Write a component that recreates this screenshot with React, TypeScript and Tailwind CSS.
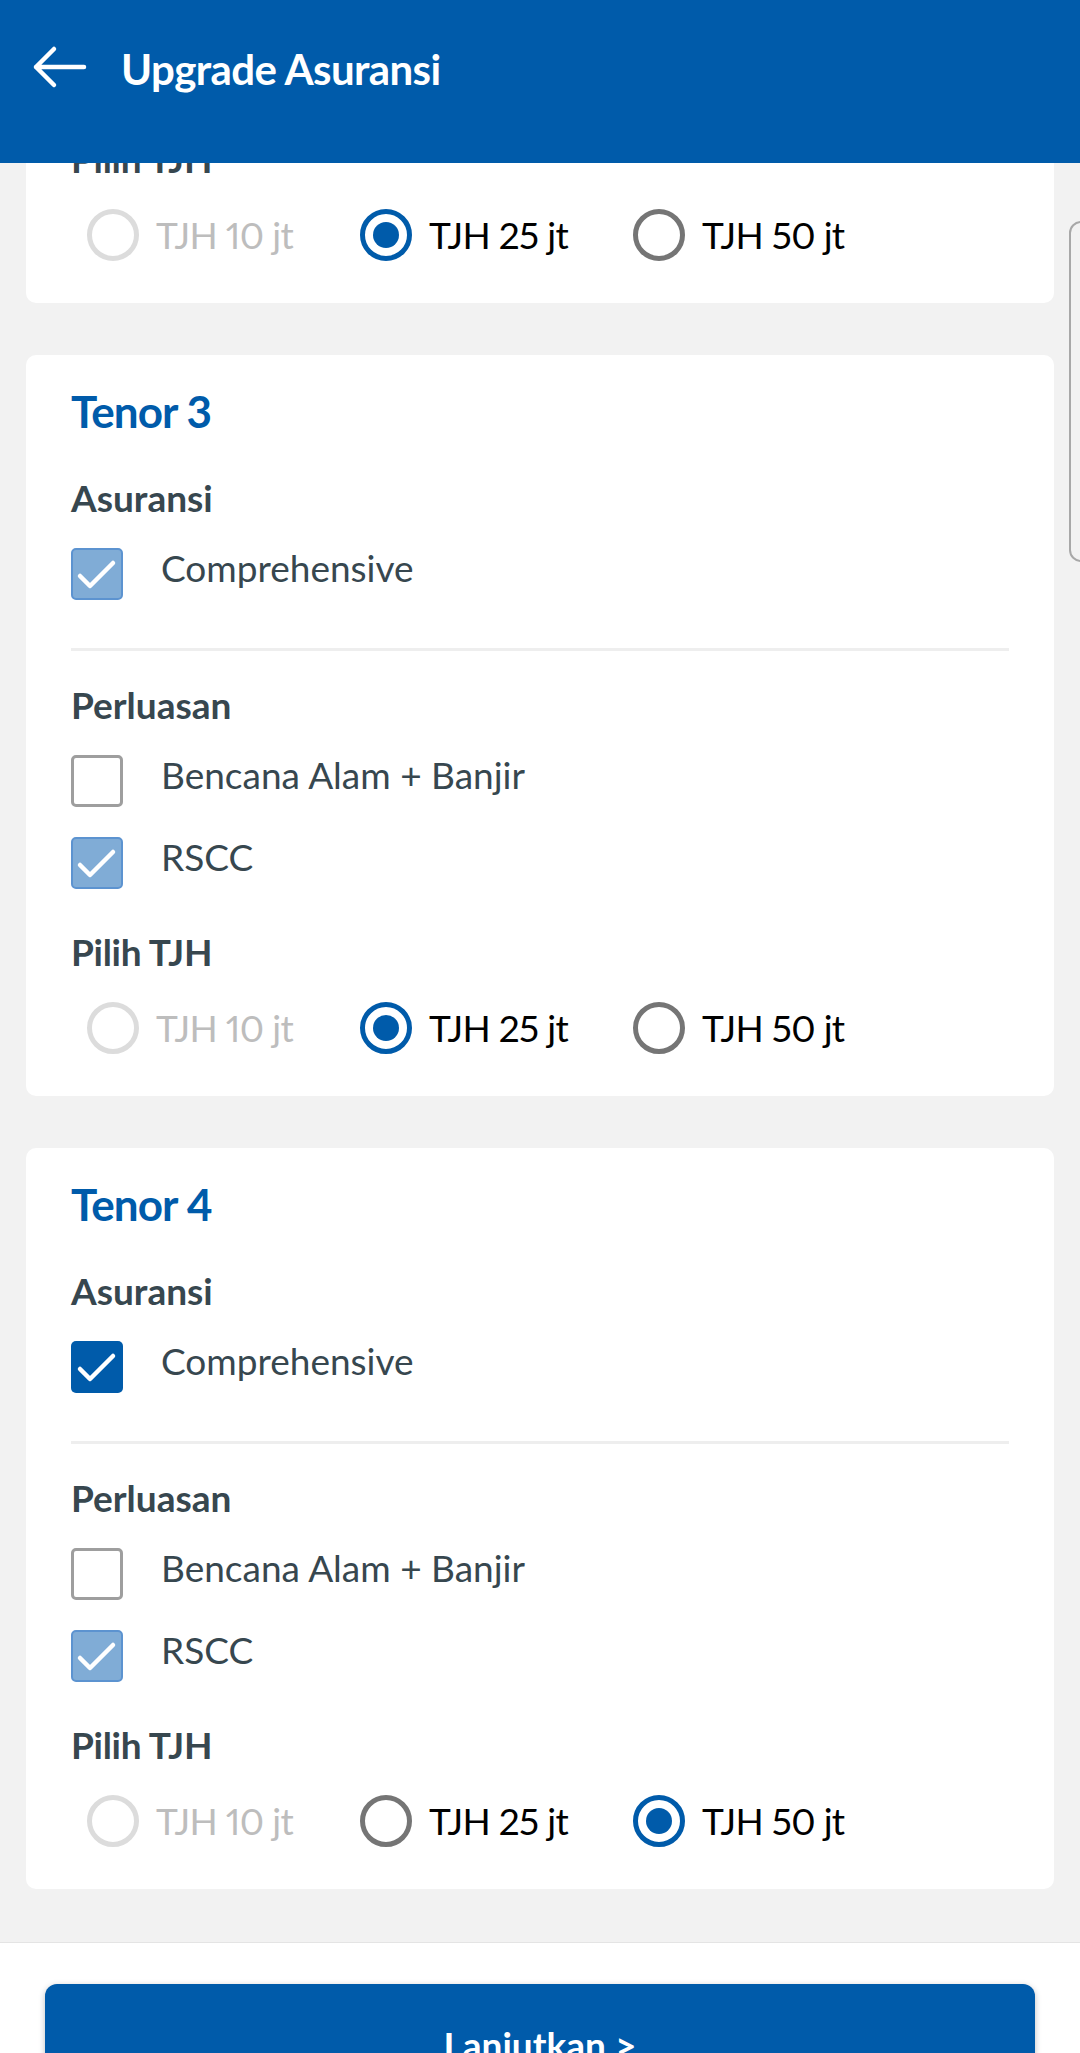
import React from "react";

type CheckState = "light" | "dark" | "off";

function CheckBox({ state }: { state: CheckState }) {
  if (state === "off") {
    return <div className="w-[52px] h-[52px] shrink-0 rounded-[5px] border-[3px] border-[#9e9e9e] bg-white" />;
  }
  const cls =
    state === "light"
      ? "w-[52px] h-[52px] shrink-0 rounded-[5px] border-[2px] border-[#5c93d0] bg-[#80acd6]"
      : "w-[52px] h-[52px] shrink-0 rounded-[5px] bg-[#005baa]";
  return (
    <div className={cls + " flex items-center justify-center"}>
      <svg width="48" height="48" viewBox="0 0 48 48" fill="none">
        <path d="M7 26 L17 36 L40 13" stroke="white" strokeWidth="4.5" strokeLinecap="round" strokeLinejoin="round" />
      </svg>
    </div>
  );
}

function CheckRow({ state, label, className }: { state: CheckState; label: string; className: string }) {
  return (
    <div className={"flex items-start " + className}>
      <CheckBox state={state} />
      <span className="ml-[38px] mt-[-2px] text-[37px] leading-[44px] text-[#37474f]">{label}</span>
    </div>
  );
}

type RadioState = "disabled" | "on" | "off";

function Radio({ state, label }: { state: RadioState; label: string }) {
  let ring = "border-[#757575]";
  let text = "text-black";
  if (state === "disabled") {
    ring = "border-[#dcdcdc]";
    text = "text-[#bdbdbd]";
  } else if (state === "on") {
    ring = "border-[#005baa]";
  }
  return (
    <div className="flex items-center w-[273px]">
      <div className={"w-[52px] h-[52px] shrink-0 rounded-full border-[5px] flex items-center justify-center " + ring}>
        {state === "on" && <div className="w-[26px] h-[26px] rounded-full bg-[#005baa]" />}
      </div>
      <span className={"ml-[17px] text-[37px] leading-[44px] tracking-[-0.7px] proportional-nums " + text}>{label}</span>
    </div>
  );
}

function Card({
  title,
  asuransi,
  bencana,
  rscc,
  tjh,
}: {
  title: string;
  asuransi: CheckState;
  bencana: CheckState;
  rscc: CheckState;
  tjh: number;
}) {
  const labels = ["TJH 10 jt", "TJH 25 jt", "TJH 50 jt"];
  return (
    <div className="bg-white rounded-[10px] px-[45px] pt-[29px] pb-[42px] flex flex-col">
      <div className="text-[44px] leading-[54px] font-bold tracking-[-0.9px] proportional-nums text-[#005baa]">{title}</div>
      <div className="mt-[38px] text-[37px] leading-[44px] font-bold text-[#37474f]">Asuransi</div>
      <CheckRow state={asuransi} label="Comprehensive" className="mt-[28px]" />
      <div className="mt-[48px] h-[3px] bg-[#eeeeee]" />
      <div className="mt-[32px] text-[37px] leading-[44px] font-bold text-[#37474f]">Perluasan</div>
      <CheckRow state={bencana} label="Bencana Alam + Banjir" className="mt-[28px]" />
      <CheckRow state={rscc} label="RSCC" className="mt-[30px]" />
      <div className="mt-[41px] text-[37px] leading-[44px] font-bold tracking-[-0.3px] text-[#37474f]">Pilih TJH</div>
      <div className="mt-[28px] pl-[16px] flex">
        {labels.map((l, i) => (
          <Radio key={l} label={l} state={i === 0 ? "disabled" : i === tjh ? "on" : "off"} />
        ))}
      </div>
    </div>
  );
}

export default function App() {
  return (
    <div
      className="relative w-[1080px] h-[2053px] overflow-hidden bg-[#f2f2f2] flex flex-col"
      style={{ fontFamily: "Lato, 'Noto Sans', sans-serif" }}
    >
      <header className="h-[163px] shrink-0 bg-[#005baa]">
        <div className="h-[137px] flex items-center pl-[32px]">
          <svg width="56" height="48" viewBox="0 0 56 48" fill="none">
            <path d="M4 22 L52 22 M22 4 L4 22 L22 40" stroke="white" strokeWidth="4.5" strokeLinecap="round" strokeLinejoin="round" />
          </svg>
          <h1 className="ml-[33px] text-[42px] leading-[52px] font-bold tracking-[-0.6px] text-white">Upgrade Asuransi</h1>
        </div>
      </header>

      <main className="h-[1779px] shrink-0 overflow-hidden">
        <div className="mt-[-601px] pl-[26px] pr-[26px] flex flex-col gap-[52px]">
          <Card title="Tenor 2" asuransi="light" bencana="off" rscc="light" tjh={1} />
          <Card title="Tenor 3" asuransi="light" bencana="off" rscc="light" tjh={1} />
          <Card title="Tenor 4" asuransi="dark" bencana="off" rscc="light" tjh={2} />
        </div>
      </main>

      <footer className="flex-1 bg-white border-t border-[#e4e4e4] px-[45px] pt-[41px]">
        <button className="w-full h-[122px] rounded-[12px] bg-[#005baa] shadow-[0_2px_6px_rgba(0,0,0,0.25)] flex items-center justify-center text-white text-[37px] leading-[44px] font-bold">
          Lanjutkan &gt;
        </button>
      </footer>

      <div className="absolute left-[1069px] top-[221px] w-[40px] h-[341px] rounded-l-[12px] border-[2px] border-[#a8a8a8]" />
    </div>
  );
}
